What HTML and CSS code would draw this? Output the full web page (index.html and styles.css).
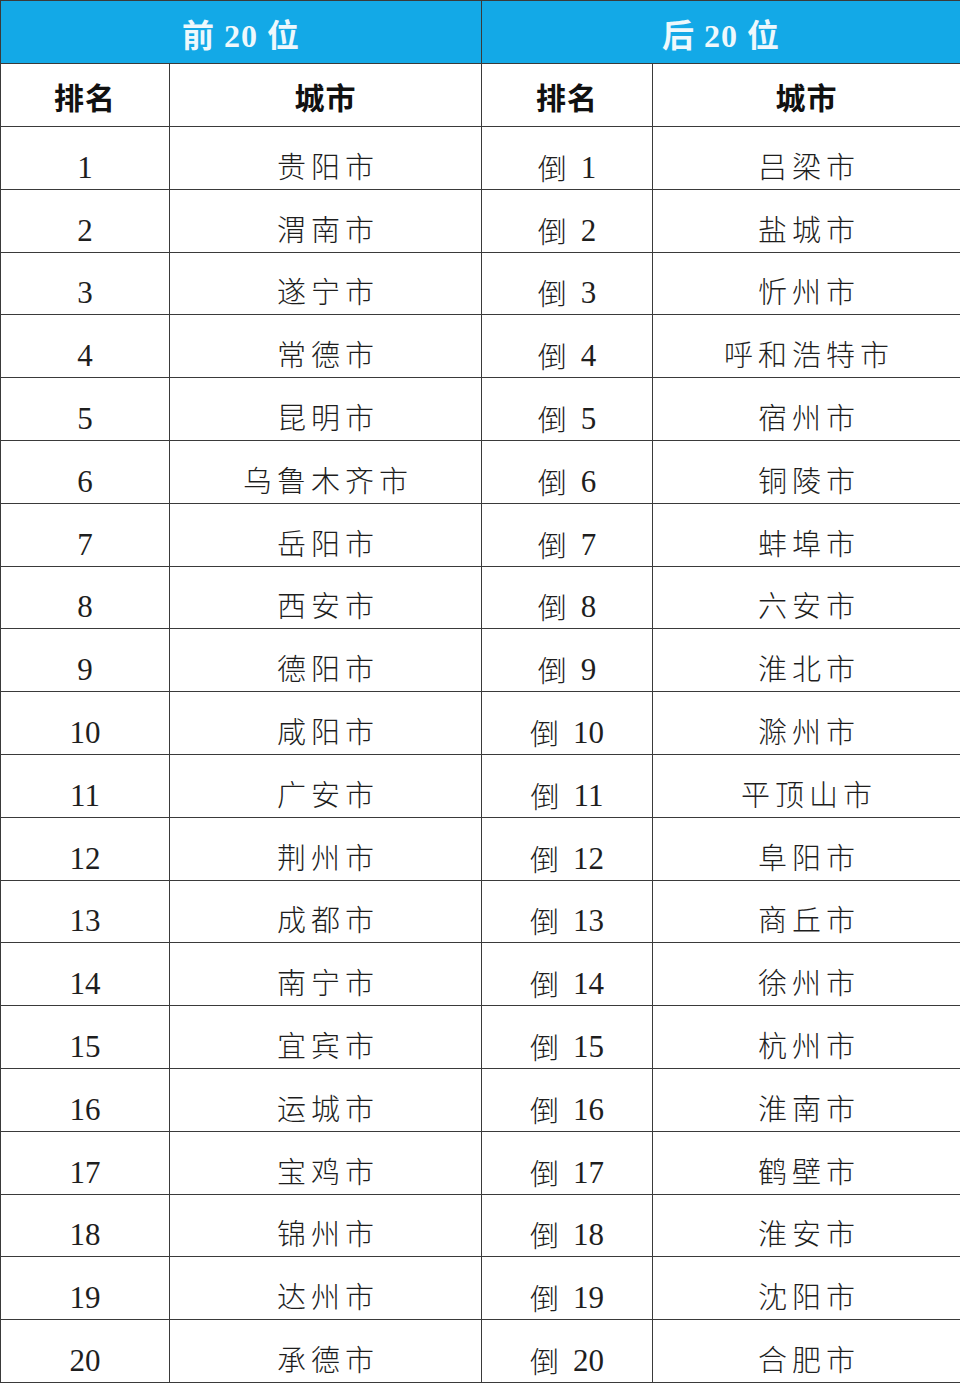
FILE: index.html
```html
<!DOCTYPE html>
<html lang="zh">
<head>
<meta charset="utf-8">
<link rel="stylesheet" href="styles.css">
</head>
<body>
<table class="rank">
  <colgroup>
    <col class="c1"><col class="c2"><col class="c3"><col class="c4">
  </colgroup>
  <thead>
    <tr class="group">
      <th colspan="2">前 20 位</th>
      <th colspan="2">后 20 位</th>
    </tr>
    <tr class="heads">
      <th>排名</th><th>城市</th><th>排名</th><th>城市</th>
    </tr>
  </thead>
  <tbody>
    <tr><td class="num">1</td><td class="city">贵阳市</td><td class="num"><span class="dao">倒</span>1</td><td class="city">吕梁市</td></tr>
    <tr><td class="num">2</td><td class="city">渭南市</td><td class="num"><span class="dao">倒</span>2</td><td class="city">盐城市</td></tr>
    <tr><td class="num">3</td><td class="city">遂宁市</td><td class="num"><span class="dao">倒</span>3</td><td class="city">忻州市</td></tr>
    <tr><td class="num">4</td><td class="city">常德市</td><td class="num"><span class="dao">倒</span>4</td><td class="city">呼和浩特市</td></tr>
    <tr><td class="num">5</td><td class="city">昆明市</td><td class="num"><span class="dao">倒</span>5</td><td class="city">宿州市</td></tr>
    <tr><td class="num">6</td><td class="city">乌鲁木齐市</td><td class="num"><span class="dao">倒</span>6</td><td class="city">铜陵市</td></tr>
    <tr><td class="num">7</td><td class="city">岳阳市</td><td class="num"><span class="dao">倒</span>7</td><td class="city">蚌埠市</td></tr>
    <tr><td class="num">8</td><td class="city">西安市</td><td class="num"><span class="dao">倒</span>8</td><td class="city">六安市</td></tr>
    <tr><td class="num">9</td><td class="city">德阳市</td><td class="num"><span class="dao">倒</span>9</td><td class="city">淮北市</td></tr>
    <tr><td class="num">10</td><td class="city">咸阳市</td><td class="num"><span class="dao">倒</span>10</td><td class="city">滁州市</td></tr>
    <tr><td class="num">11</td><td class="city">广安市</td><td class="num"><span class="dao">倒</span>11</td><td class="city">平顶山市</td></tr>
    <tr><td class="num">12</td><td class="city">荆州市</td><td class="num"><span class="dao">倒</span>12</td><td class="city">阜阳市</td></tr>
    <tr><td class="num">13</td><td class="city">成都市</td><td class="num"><span class="dao">倒</span>13</td><td class="city">商丘市</td></tr>
    <tr><td class="num">14</td><td class="city">南宁市</td><td class="num"><span class="dao">倒</span>14</td><td class="city">徐州市</td></tr>
    <tr><td class="num">15</td><td class="city">宜宾市</td><td class="num"><span class="dao">倒</span>15</td><td class="city">杭州市</td></tr>
    <tr><td class="num">16</td><td class="city">运城市</td><td class="num"><span class="dao">倒</span>16</td><td class="city">淮南市</td></tr>
    <tr><td class="num">17</td><td class="city">宝鸡市</td><td class="num"><span class="dao">倒</span>17</td><td class="city">鹤壁市</td></tr>
    <tr><td class="num">18</td><td class="city">锦州市</td><td class="num"><span class="dao">倒</span>18</td><td class="city">淮安市</td></tr>
    <tr><td class="num">19</td><td class="city">达州市</td><td class="num"><span class="dao">倒</span>19</td><td class="city">沈阳市</td></tr>
    <tr><td class="num">20</td><td class="city">承德市</td><td class="num"><span class="dao">倒</span>20</td><td class="city">合肥市</td></tr>
  </tbody>
</table>
</body>
</html>
```
FILE: styles.css
```css
html, body {
  margin: 0;
  padding: 0;
  background: #ffffff;
}
.rank {
  width: 960px;
  border-collapse: collapse;
  table-layout: fixed;
  font-family: "Liberation Serif", "Noto Sans CJK SC", serif;
  color: #1e1e1e;
}
.c1 { width: 169px; }
.c2 { width: 312px; }
.c3 { width: 171px; }
.c4 { width: 308px; }
.rank th, .rank td {
  border: 1.5px solid #3a3a3a;
  text-align: center;
  padding: 0;
}
.group th {
  height: 63px;
  background: #13a9e7;
  color: #eef8fc;
  font-size: 32px;
  font-weight: 700;
  letter-spacing: 1px;
  padding-top: 2px;
  box-sizing: border-box;
}
.heads th {
  height: 63px;
  font-size: 30px;
  font-weight: 700;
  color: #111;
  letter-spacing: 1px;
  padding-top: 2px;
  box-sizing: border-box;
}
.rank tbody td {
  height: 62.8px;
  box-sizing: border-box;
  padding-top: 20px;
  font-size: 31px;
  line-height: 36px;
  vertical-align: middle;
}
.rank tbody td.city {
  font-size: 29px;
  font-weight: 300;
  letter-spacing: 5px;
  text-indent: 5px;
}
.rank tbody td.num {
  font-weight: 400;
}
.dao {
  font-family: "Noto Sans CJK SC", sans-serif;
  font-size: 29px;
  font-weight: 300;
  line-height: 1;
  vertical-align: -2px;
  margin-right: 14px;
}
```
